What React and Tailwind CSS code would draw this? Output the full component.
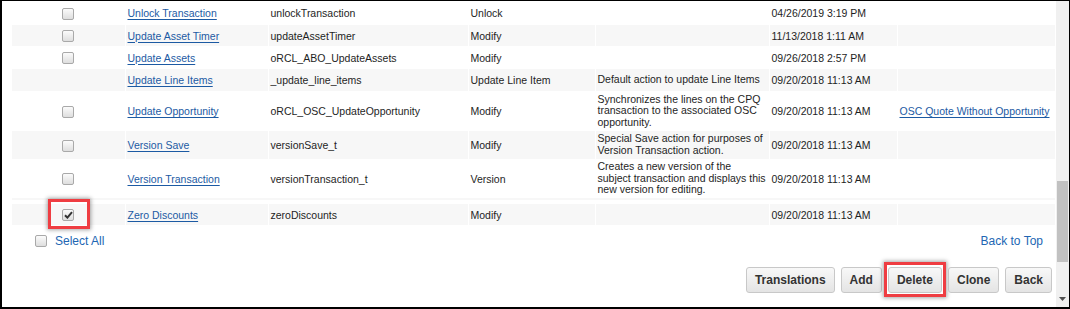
import React from 'react'

const rows = [
  { name: 'Unlock Transaction', variable: 'unlockTransaction', type: 'Unlock', date: '04/26/2019 3:19 PM', h: 'h-[24px]' },
  { name: 'Update Asset Timer', variable: 'updateAssetTimer', type: 'Modify', date: '11/13/2018 1:11 AM', h: 'h-[21px]', striped: true },
  { name: 'Update Assets', variable: 'oRCL_ABO_UpdateAssets', type: 'Modify', date: '09/26/2018 2:57 PM', h: 'h-[23px]' },
  {
    name: 'Update Line Items',
    variable: '_update_line_items',
    type: 'Update Line Item',
    desc: ['Default action to update Line Items'],
    date: '09/20/2018 11:13 AM',
    h: 'h-[22px]',
    striped: true,
    noCheck: true,
  },
  {
    name: 'Update Opportunity',
    variable: 'oRCL_OSC_UpdateOpportunity',
    type: 'Modify',
    desc: ['Synchronizes the lines on the CPQ', 'transaction to the associated OSC', 'opportunity.'],
    date: '09/20/2018 11:13 AM',
    link: 'OSC Quote Without Opportunity',
    h: 'h-[40px]',
  },
  {
    name: 'Version Save',
    variable: 'versionSave_t',
    type: 'Modify',
    desc: ['Special Save action for purposes of', 'Version Transaction action.'],
    date: '09/20/2018 11:13 AM',
    h: 'h-[28px]',
    striped: true,
  },
  {
    name: 'Version Transaction',
    variable: 'versionTransaction_t',
    type: 'Version',
    desc: ['Creates a new version of the', 'subject transaction and displays this', 'new version for editing.'],
    date: '09/20/2018 11:13 AM',
    h: 'h-[39px]',
  },
]

function Checkbox({ checked }) {
  return (
    <span className="inline-flex items-center justify-center w-[12px] h-[12px] rounded-[2px] border border-[#a9a9a9] bg-gradient-to-b from-[#fbfbfb] to-[#dedede] align-middle">
      {checked && (
        <svg width="9" height="8" viewBox="0 0 9 8">
          <path d="M1 4.2 L3.4 6.6 L8 1.2" fill="none" stroke="#333" strokeWidth="2" />
        </svg>
      )}
    </span>
  )
}

function Highlight({ className }) {
  return (
    <span
      className={`absolute border-[3px] border-[#ef3d42] shadow-[0_0_4px_1px_rgba(0,0,0,0.35)] pointer-events-none ${className}`}
    />
  )
}

const cell = 'border-l border-white pl-[2px] align-middle whitespace-nowrap'

function Row({ r, checked, highlight }) {
  return (
    <tr className={`${r.h} ${r.striped ? 'bg-[#f7f7f7]' : 'bg-white'}`}>
      <td className="text-center align-middle">
        {!r.noCheck && (
          <span className="relative inline-block leading-none">
            <Checkbox checked={checked} />
            {highlight && <Highlight className="-left-[14px] -right-[16px] -top-[10px] -bottom-[8px]" />}
          </span>
        )}
      </td>
      <td className={cell}>
        <a className="text-[#1c5aa3] underline underline-offset-[2px]">{r.name}</a>
      </td>
      <td className={cell}>{r.variable}</td>
      <td className={cell}>{r.type}</td>
      <td className={`${cell} leading-[11.6px]`}>
        {r.desc && r.desc.map((l) => <div key={l}>{l}</div>)}
      </td>
      <td className={cell}>{r.date}</td>
      <td className={cell}>
        {r.link && <a className="text-[#1c5aa3] underline underline-offset-[2px]">{r.link}</a>}
      </td>
    </tr>
  )
}

function Button({ children, highlight }) {
  return (
    <span className="relative inline-flex">
      <button className="h-[26px] px-[8px] rounded-[3px] border border-[#c8c8c8] bg-gradient-to-b from-[#f8f8f8] to-[#e4e4e4] text-[12px] font-bold text-[#333]">
        {children}
      </button>
      {highlight && <Highlight className="-left-[4px] -right-[4px] -top-[5px] -bottom-[4px]" />}
    </span>
  )
}

export default function App() {
  return (
    <div
      className="w-[1070px] h-[309px] bg-white border-black border-t border-l-2 border-r border-b-2 flex overflow-hidden text-[#1e1e1e]"
      style={{ fontFamily: '"Liberation Sans", Arial, sans-serif' }}
    >
      <div className="flex-1 pl-[10px] pr-[1px]">
        <table className="table-fixed border-collapse w-[1043px] text-[10.5px] leading-[12px]">
          <colgroup>
            <col className="w-[113px]" />
            <col className="w-[143px]" />
            <col className="w-[200px]" />
            <col className="w-[127px]" />
            <col className="w-[174px]" />
            <col className="w-[128px]" />
            <col className="w-[158px]" />
          </colgroup>
          <tbody>
            {rows.map((r) => (
              <Row key={r.name} r={r} />
            ))}
            <tr className="h-[2px] bg-[#f7f7f7]">
              <td colSpan={7} className="p-0" />
            </tr>
            <tr className="h-[4px] bg-white">
              <td colSpan={7} className="p-0" />
            </tr>
            <Row
              r={{ name: 'Zero Discounts', variable: 'zeroDiscounts', type: 'Modify', date: '09/20/2018 11:13 AM', h: 'h-[21px]', striped: true }}
              checked
              highlight
            />
          </tbody>
        </table>

        <div className="mt-[7px] h-[17px] flex items-center justify-between text-[12px] text-[#2166b3]">
          <div className="flex items-center pl-[23px] gap-[8px]">
            <Checkbox />
            <span>Select All</span>
          </div>
          <span className="pr-[12px]">Back to Top</span>
        </div>

        <div className="mt-[18px] flex justify-end gap-[6px] pr-[3px]">
          <Button>Translations</Button>
          <Button>Add</Button>
          <Button highlight>Delete</Button>
          <Button>Clone</Button>
          <Button>Back</Button>
        </div>
      </div>

      <div className="w-[13px] bg-[#f0f0f0] flex flex-col">
        <div className="mt-[180px] h-[81px] mx-[1px] bg-[#c1c1c1]" />
        <div className="mt-auto h-[16px] flex items-center justify-center">
          <svg width="7" height="4" viewBox="0 0 7 4">
            <path d="M0 0 L7 0 L3.5 4 Z" fill="#505050" />
          </svg>
        </div>
      </div>
    </div>
  )
}
